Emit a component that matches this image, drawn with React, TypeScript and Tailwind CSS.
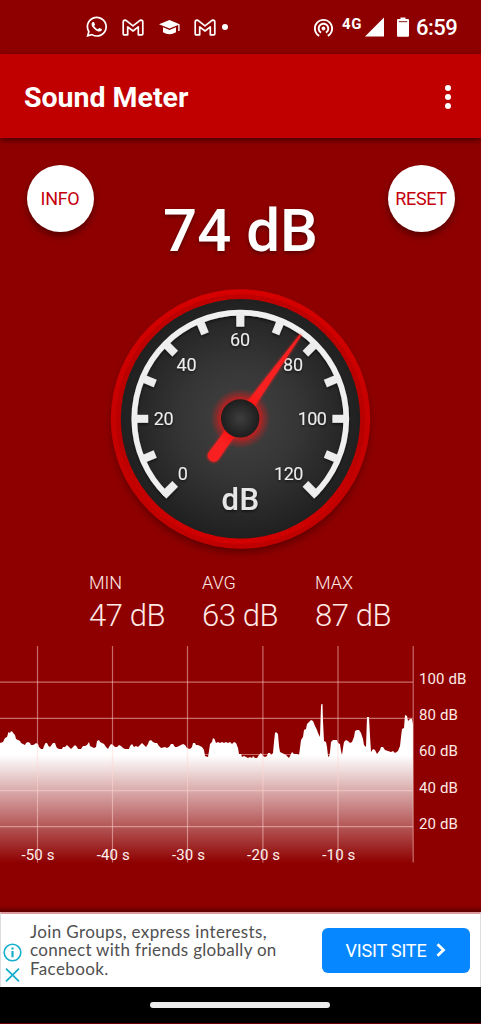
import React from "react";
import { MdWifiTethering } from "react-icons/md";
import { FaWhatsapp } from "react-icons/fa";

const TICKS = [-135, -112.5, -90, -67.5, -45, -22.5, 0, 22.5, 45, 67.5, 90, 112.5, 135];

const SCALE = [
  { t: "0", x: 82.7, y: 200, w: 10 },
  { t: "20", x: 63.7, y: 145, w: 20 },
  { t: "40", x: 86.5, y: 91, w: 20 },
  { t: "60", x: 140, y: 66, w: 20 },
  { t: "80", x: 193, y: 91, w: 20 },
  { t: "100", x: 212.3, y: 145, w: 29.3 },
  { t: "120", x: 188.7, y: 200, w: 29.3 },
];

/* Level history: x in pixels, y measured from the top of the plot. */
const LEVELS =
  "0,97 3,96 5,92 7,91 8.5,86 10,87 11,85 12.5,86 14,88 15,89 16,93 18,94 20,95 21,97 23,98 25,99 26,97 28,96 30,97 31,99 33,99 35,98 36,97 38,98 39,101 41,103 43,103 44,100 45.5,97 47,97 48.5,100 50,101 51.5,99 53,97 55,97 56,100 57,102 59,103 62,103 63,101 65,101 67,99 69,101 71,103 73,101 75,99 77,101 78,103 81,103 83,100 85,100 87,99 89,96 90,100 92,101 94,102 96,101 97,95 99,94 100,96 102,97 104,98 106,101 108,103 109,101 111,98 113,99 115,101 117,101 119,99 121,100 123,102 125,103 129,103 130,100 132,98 134,101 136,100 138,101 140,99 142,97 144,99 146,101 148,98 149,95 151,94 153,96 155,97 157,97 159,100 161,102 165,101 167,102 169,101 171,98 173,98 175,101 177,101 179,100 181,99 183,98 185,99 187,102 190,103 192,101 193,97 195,97 196,99 198,99 200,100 202,101 204,104 205,110 208,111 209,105 210,98 212,96 213,92 214.5,93 216,97 218,96 220,97 222,96 224,97 226,96 228,97 230,96 232,98 234,96 236,97 238,102 239,108 241,108 242,111 244,110 246,111 248,112 250,111 252,112 253,110 255,112 257,112 259,109 261,107 263,110 265,111 267,110 268,107 270,107 271,109 273,107 274,96 275,87 276,86 278,88 279,100 280,106 282,107 284,108 286,109 289,112 291,108 292,106 294,108 297,108 299,109 300,102 301,94 303,91 304,84 306,83 307,78 309,76 311,74 313,75 315,80 317,84 318,87 320,91 321,60 321.5,58 322.5,58 323,75 324,95 326,96 327,101 328,110 329,111 330,106 331,96 333,94 337,94 338,97 340,98 341,105 342,109 343,102 344,96 346,94 348,95 350,97 352,96 354,91 355,85 357,84 359,84 361,87 363,93 364,99 366,101 367,71 369,71 370,90 371,106 373,103 375,104 377,108 380,104 381,101 383,101 385,104 388,105 391,106 393,105 395,107 398,105 400,100 401,91 402,83 404,82 405,69 407,70 408,75 410,73 412,73 413,78";

function GmailIcon() {
  return (
    <svg width="22" height="17" viewBox="0 0 22 17" fill="none" stroke="#fff" strokeWidth="1.7" strokeLinejoin="round">
      <path d="M1.2 3.1 Q1.2 1.2 3 1.2 L4 1.4 L11 6.8 L18 1.4 L19 1.2 Q20.8 1.2 20.8 3.1 V14.8 Q20.8 15.8 19.8 15.8 H16.3 V7.9 L11 12 L5.7 7.9 V15.8 H2.2 Q1.2 15.8 1.2 14.8 Z" />
    </svg>
  );
}

function StatusBar() {
  return (
    <div className="flex h-[54px] shrink-0 items-center pl-[84.5px] pr-6 text-white">
      <FaWhatsapp className="size-[23.5px]" />
      <div className="ml-[13.5px]"><GmailIcon /></div>
      <svg className="ml-[15px]" width="21" height="15" viewBox="0 0 21 15" fill="#fff">
        <path d="M0 4.2 L10.5 0 L20.6 4.2 V11 H19.2 V5 L10.5 8.6 Z" />
        <path d="M4 7.3 L10.5 10 L17 7.3 V12.2 Q10.5 16.4 4 12.2 Z" />
      </svg>
      <div className="ml-[14px]"><GmailIcon /></div>
      <div className="ml-[6.5px] size-[6px] rounded-full bg-white" />
      <div className="ml-auto flex items-center">
        <MdWifiTethering className="size-[23px]" />
        <span className="mb-[6px] ml-[7px] text-[15px] font-bold leading-none tracking-[0.6px]">4G</span>
        <svg className="ml-[3px]" width="20" height="20" viewBox="0 0 20 20" fill="#fff"><path d="M0 19.5 L19 0.5 V19.5 Z" /></svg>
        <svg className="ml-3" width="12" height="20" viewBox="0 0 12 20">
          <path d="M3.5 0.5 H8.5 V2 H11 Q12 2 12 3 V18.8 Q12 19.8 11 19.8 H1 Q0 19.8 0 18.8 V3 Q0 2 1 2 H3.5 Z" fill="#fff" />
          <rect x="1.8" y="4" width="8.4" height="1.2" fill="#a04040" />
        </svg>
        <span className="ml-[7px] mt-[2px] w-[41px] text-[22px] font-medium leading-none tracking-[-0.5px]">6:59</span>
      </div>
    </div>
  );
}

function Gauge() {
  return (
    <svg className="block" width="280" height="280" viewBox="0 0 280 280">
      <defs>
        <radialGradient id="face">
          <stop offset="0" stopColor="#424242" />
          <stop offset="0.5" stopColor="#353535" />
          <stop offset="1" stopColor="#202020" />
        </radialGradient>
        <linearGradient id="rim" x1="0" y1="0" x2="0" y2="1">
          <stop offset="0" stopColor="#d60000" />
          <stop offset="0.45" stopColor="#c80000" />
          <stop offset="1" stopColor="#c00000" />
        </linearGradient>
        <linearGradient id="edge" x1="0" y1="0" x2="0" y2="1">
          <stop offset="0" stopColor="#c00000" />
          <stop offset="0.6" stopColor="#b80000" />
          <stop offset="1" stopColor="#d20000" />
        </linearGradient>
        <radialGradient id="hub">
          <stop offset="0" stopColor="#3e3e3e" />
          <stop offset="1" stopColor="#1d1d1d" />
        </radialGradient>
        <radialGradient id="glow">
          <stop offset="0.6" stopColor="#ff1010" stopOpacity="0.75" />
          <stop offset="0.8" stopColor="#ff1010" stopOpacity="0.33" />
          <stop offset="1" stopColor="#ff1010" stopOpacity="0" />
        </radialGradient>
        <filter id="soft" x="-20%" y="-20%" width="140%" height="140%"><feGaussianBlur stdDeviation="4" /></filter>
        <filter id="halo" x="-80%" y="-20%" width="260%" height="140%"><feGaussianBlur stdDeviation="1.2" /></filter>
        <filter id="drop" x="-20%" y="-20%" width="140%" height="140%"><feDropShadow dx="0" dy="1.5" stdDeviation="1.5" floodColor="#000" floodOpacity="0.6" /></filter>
      </defs>
      <circle cx="140.5" cy="144" r="128" fill="#000" opacity="0.38" filter="url(#soft)" />
      <circle cx="140.5" cy="139" r="129.7" fill="url(#rim)" />
      <circle cx="140.5" cy="139" r="122.2" fill="none" stroke="url(#edge)" strokeWidth="5" />
      <circle cx="140.5" cy="138.8" r="119.7" fill="url(#face)" />
      <g filter="url(#drop)">
        <path d="M66.2 214.4 A106 106 0 1 1 214.4 214.4" fill="none" stroke="#f0f0f0" strokeWidth="5.6" />
        {TICKS.map((a) => (
          <path key={a} d={Math.abs(a) === 135 ? "M140.3 30.2 V46.7" : "M140.3 32 V46.7"} stroke="#ededed" strokeWidth="8" transform={`rotate(${a} 140.3 138.8)`} />
        ))}
        {SCALE.map((s) => (
          <text key={s.t} x={s.x} y={s.y - 0.5} textAnchor="middle" textLength={s.w} fill="#ededed" className="text-[18px]">{s.t}</text>
        ))}
        <text x="140.3" y="230.3" textAnchor="middle" textLength="37.5" fill="#e6e6e6" className="text-[31px] font-medium">dB</text>
      </g>
      <g transform="rotate(35.7 140.3 138.8)">
        <path d="M139 35 L134.6 138 L133.8 184 Q133.8 191 140.3 191 Q146.8 191 146.8 184 L146 138 L141.6 35 Z" fill="#ff2020" opacity="0.65" filter="url(#halo)" />
        <path d="M139.4 36 L135.2 138 L134.3 184 Q134.3 190 140.3 190 Q146.3 190 146.3 184 L145.4 138 L141.2 36 Z" fill="#f82020" />
      </g>
      <circle cx="140.3" cy="138.6" r="30" fill="url(#glow)" />
      <circle cx="140.2" cy="138.4" r="19.2" fill="url(#hub)" />
    </svg>
  );
}

function Stat({ label, value }: { label: string; value: string }) {
  return (
    <div className="w-[113px] font-light text-[#ffe9e6]">
      <div className="text-[18px] leading-[22px]">{label}</div>
      <div className="mt-[4px] text-[31px] leading-[36px] tracking-[-0.4px]">{value}</div>
    </div>
  );
}

function HistoryChart() {
  return (
    <svg className="block" width="481" height="220" viewBox="0 0 481 220">
      <defs>
        <linearGradient id="fade" gradientUnits="userSpaceOnUse" x1="0" y1="109" x2="0" y2="217">
          <stop offset="0" stopColor="#fff" />
          <stop offset="1" stopColor="#fff" stopOpacity="0" />
        </linearGradient>
      </defs>
      <path d="M0 108.5 H413" stroke="#ffb8b8" strokeOpacity="0.55" />
      <polygon points={`0,217 ${LEVELS} 413,217`} fill="url(#fade)" />
      {[36.2, 72.3, 144.7, 180.6].map((y) => (
        <path key={y} d={`M0 ${y} H413`} stroke="#ffd8d4" strokeOpacity="0.5" strokeWidth="1.2" />
      ))}
      {[37.5, 112.5, 187.5, 262.9, 338, 413.2].map((x) => (
        <path key={x} d={`M${x} 0 V216.5`} stroke="#ffd8d4" strokeOpacity="0.5" strokeWidth="1.2" />
      ))}
      {["-50 s", "-40 s", "-30 s", "-20 s", "-10 s"].map((t, i) => (
        <text key={t} x={38 + i * 75.2} y="214" textAnchor="middle" textLength="33" fill="#fff0ee" className="text-[15px]">{t}</text>
      ))}
      {["100 dB", "80 dB", "60 dB", "40 dB", "20 dB"].map((t, i) => (
        <text key={t} x="419" y={38 + i * 36.2} textLength={i === 0 ? 47.3 : 38.8} fill="#ffe9e6" className="text-[15px]">{t}</text>
      ))}
    </svg>
  );
}

function AdBanner() {
  return (
    <div className="flex h-[75px] shrink-0 border-b-0 border-l border-r border-t-2 border-l-[#ddd] border-r-[#ddd] border-t-[#dc9a9f] bg-white">
      <div className="flex w-[29px] flex-col items-center pr-[6px] pt-[29px]">
        <svg width="19" height="19" viewBox="0 0 19 19" fill="none" stroke="#15aecb">
          <circle cx="9.5" cy="9.5" r="8.3" strokeWidth="1.6" />
          <path d="M9.5 8 V14.2 M9.5 4.4 V6.5" strokeWidth="2.2" />
        </svg>
        <svg className="mt-[6px]" width="15" height="14" viewBox="0 0 15 14" fill="none" stroke="#15aecb" strokeWidth="1.8"><path d="M1 0.7 L14 13.3 M14 0.7 L1 13.3" /></svg>
      </div>
      <div className="w-[280px] whitespace-nowrap pt-[9px] font-['Lato','Roboto',sans-serif] text-[17px] leading-[18.4px] text-[#505050]">
        <p className="tracking-[0.37px]">Join Groups, express interests,</p>
        <p className="tracking-[0.29px]">connect with friends globally on</p>
        <p className="tracking-[0.37px]">Facebook.</p>
      </div>
      <button className="ml-[12px] mt-[13.5px] flex h-[45px] w-[148px] items-center justify-center gap-[10px] rounded-[6px] bg-[#0787ff] text-[18px] text-white">
        <span className="tracking-[-0.2px]">VISIT SITE</span>
        <svg width="10" height="14" viewBox="0 0 10 14" fill="none" stroke="#fff" strokeWidth="2.8"><path d="M1.5 1.2 L7.5 7 L1.5 12.8" /></svg>
      </button>
    </div>
  );
}

export default function App() {
  return (
    <div className="flex h-[1024px] w-[481px] flex-col overflow-hidden bg-[#8e0000] font-['Roboto',sans-serif]">
      <StatusBar />
      <header className="z-10 flex h-[84px] shrink-0 items-center justify-between bg-[#c00000] pl-6 pr-[30px] text-white shadow-[0_2px_6px_rgba(0,0,0,0.55)]">
        <h1 className="mt-[4px] text-[28.5px] font-bold leading-none tracking-[-0.02px]">Sound Meter</h1>
        <div className="mt-px flex flex-col gap-[3px]">
          <i className="size-[6px] rounded-full bg-white" />
          <i className="size-[6px] rounded-full bg-white" />
          <i className="size-[6px] rounded-full bg-white" />
        </div>
      </header>
      <main className="flex flex-1 flex-col">
        <div className="flex h-[142px] items-start justify-between px-[26.5px] pt-[26.5px]">
          <button className="size-[67px] rounded-full bg-white text-[18px] tracking-[-0.3px] text-[#c4000c] shadow-[0_4px_7px_rgba(0,0,0,0.4)]">INFO</button>
          <div className="mt-[31.5px] text-[60px] font-medium leading-[70px] text-white [text-shadow:0_2px_4px_rgba(0,0,0,0.4)]">74 dB</div>
          <button className="size-[67px] rounded-full bg-white text-[18px] tracking-[-0.3px] text-[#c4000c] shadow-[0_4px_7px_rgba(0,0,0,0.4)]">RESET</button>
        </div>
        <div className="flex h-[280px] pl-[100px]"><Gauge /></div>
        <div className="flex h-[86px] pl-[89px] pt-[12px]">
          <Stat label="MIN" value="47 dB" />
          <Stat label="AVG" value="63 dB" />
          <Stat label="MAX" value="87 dB" />
        </div>
        <HistoryChart />
      </main>
      <div className="h-[6px] shrink-0 bg-linear-to-b from-[#8e0000] to-[#5c0000]" />
      <AdBanner />
      <div className="flex h-[37px] shrink-0 items-center justify-center border-b border-[#6c0000] bg-black pr-px">
        <div className="h-[6px] w-[180px] rounded-full bg-[#ececec]" />
      </div>
    </div>
  );
}
